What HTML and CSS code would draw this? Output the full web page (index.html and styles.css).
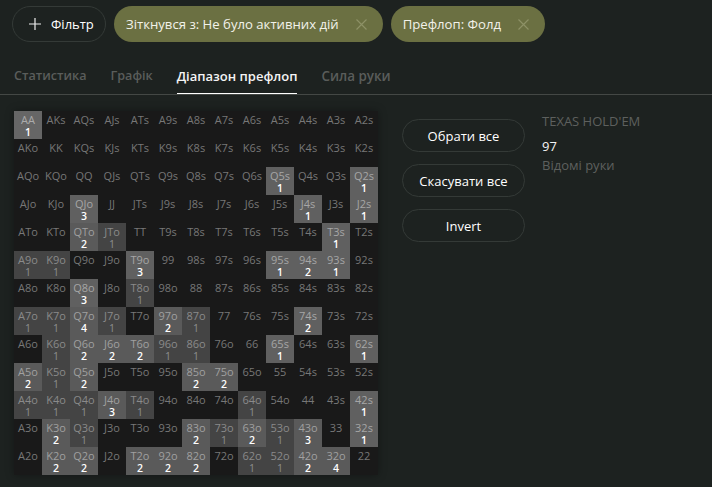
FILE: index.html
```html
<!DOCTYPE html>
<html lang="uk">
<head>
<meta charset="utf-8">
<title>Діапазон префлоп</title>
<link rel="stylesheet" href="styles.css">
</head>
<body>
<div class="filters">
  <button class="add-filter"><svg class="plus" viewBox="0 0 12 12"><path d="M6 0v12M0 6h12"/></svg>Фільтр</button>
  <div class="chip"><span>Зіткнувся з: Не було активних дій</span><svg class="close" viewBox="0 0 11 11"><path d="M.5.5l10 10M10.5.5l-10 10"/></svg></div>
  <div class="chip"><span>Префлоп: Фолд</span><svg class="close" viewBox="0 0 11 11"><path d="M.5.5l10 10M10.5.5l-10 10"/></svg></div>
</div>
<nav class="tabs">
  <span class="tab">Статистика</span>
  <span class="tab">Графік</span>
  <span class="tab active">Діапазон префлоп</span>
  <span class="tab wide">Сила руки</span>
</nav>
<main class="content">
  <div class="grid">
    <div class="cell s4">AA<b>1</b></div><div class="cell">AKs</div><div class="cell">AQs</div><div class="cell">AJs</div><div class="cell">ATs</div><div class="cell">A9s</div><div class="cell">A8s</div><div class="cell">A7s</div><div class="cell">A6s</div><div class="cell">A5s</div><div class="cell">A4s</div><div class="cell">A3s</div><div class="cell">A2s</div>
    <div class="cell">AKo</div><div class="cell">KK</div><div class="cell">KQs</div><div class="cell">KJs</div><div class="cell">KTs</div><div class="cell">K9s</div><div class="cell">K8s</div><div class="cell">K7s</div><div class="cell">K6s</div><div class="cell">K5s</div><div class="cell">K4s</div><div class="cell">K3s</div><div class="cell">K2s</div>
    <div class="cell">AQo</div><div class="cell">KQo</div><div class="cell">QQ</div><div class="cell">QJs</div><div class="cell">QTs</div><div class="cell">Q9s</div><div class="cell">Q8s</div><div class="cell">Q7s</div><div class="cell">Q6s</div><div class="cell s3">Q5s<b>1</b></div><div class="cell">Q4s</div><div class="cell">Q3s</div><div class="cell s3">Q2s<b>1</b></div>
    <div class="cell">AJo</div><div class="cell">KJo</div><div class="cell s3">QJo<b>3</b></div><div class="cell">JJ</div><div class="cell">JTs</div><div class="cell">J9s</div><div class="cell">J8s</div><div class="cell">J7s</div><div class="cell">J6s</div><div class="cell">J5s</div><div class="cell s3">J4s<b>1</b></div><div class="cell">J3s</div><div class="cell s3">J2s<b>1</b></div>
    <div class="cell">ATo</div><div class="cell">KTo</div><div class="cell s2">QTo<b>2</b></div><div class="cell s1">JTo<i>1</i></div><div class="cell">TT</div><div class="cell">T9s</div><div class="cell">T8s</div><div class="cell">T7s</div><div class="cell">T6s</div><div class="cell">T5s</div><div class="cell">T4s</div><div class="cell s3">T3s<b>1</b></div><div class="cell">T2s</div>
    <div class="cell s1">A9o<i>1</i></div><div class="cell s1">K9o<i>1</i></div><div class="cell">Q9o</div><div class="cell">J9o</div><div class="cell s3">T9o<b>3</b></div><div class="cell">99</div><div class="cell">98s</div><div class="cell">97s</div><div class="cell">96s</div><div class="cell s3">95s<b>1</b></div><div class="cell s3">94s<b>2</b></div><div class="cell s3">93s<b>1</b></div><div class="cell">92s</div>
    <div class="cell">A8o</div><div class="cell">K8o</div><div class="cell s3">Q8o<b>3</b></div><div class="cell">J8o</div><div class="cell s1">T8o<i>1</i></div><div class="cell">98o</div><div class="cell">88</div><div class="cell">87s</div><div class="cell">86s</div><div class="cell">85s</div><div class="cell">84s</div><div class="cell">83s</div><div class="cell">82s</div>
    <div class="cell s1">A7o<i>1</i></div><div class="cell s1">K7o<i>1</i></div><div class="cell s2">Q7o<b>4</b></div><div class="cell s1">J7o<i>1</i></div><div class="cell">T7o</div><div class="cell s2">97o<b>2</b></div><div class="cell s1">87o<i>1</i></div><div class="cell">77</div><div class="cell">76s</div><div class="cell">75s</div><div class="cell s3">74s<b>2</b></div><div class="cell">73s</div><div class="cell">72s</div>
    <div class="cell">A6o</div><div class="cell s1">K6o<i>1</i></div><div class="cell s2">Q6o<b>2</b></div><div class="cell s2">J6o<b>2</b></div><div class="cell s2">T6o<b>2</b></div><div class="cell s1">96o<i>1</i></div><div class="cell s1">86o<i>1</i></div><div class="cell">76o</div><div class="cell">66</div><div class="cell s3">65s<b>1</b></div><div class="cell">64s</div><div class="cell">63s</div><div class="cell s3">62s<b>1</b></div>
    <div class="cell s2">A5o<b>2</b></div><div class="cell s1">K5o<i>1</i></div><div class="cell s2">Q5o<b>2</b></div><div class="cell">J5o</div><div class="cell">T5o</div><div class="cell">95o</div><div class="cell s2">85o<b>2</b></div><div class="cell s2">75o<b>2</b></div><div class="cell">65o</div><div class="cell">55</div><div class="cell">54s</div><div class="cell">53s</div><div class="cell">52s</div>
    <div class="cell s1">A4o<i>1</i></div><div class="cell s1">K4o<i>1</i></div><div class="cell s1">Q4o<i>1</i></div><div class="cell s2">J4o<b>3</b></div><div class="cell s1">T4o<i>1</i></div><div class="cell">94o</div><div class="cell">84o</div><div class="cell">74o</div><div class="cell s1">64o<i>1</i></div><div class="cell">54o</div><div class="cell">44</div><div class="cell">43s</div><div class="cell s3">42s<b>1</b></div>
    <div class="cell">A3o</div><div class="cell s2">K3o<b>2</b></div><div class="cell s1">Q3o<i>1</i></div><div class="cell">J3o</div><div class="cell">T3o</div><div class="cell">93o</div><div class="cell s2">83o<b>2</b></div><div class="cell s1">73o<i>1</i></div><div class="cell s2">63o<b>2</b></div><div class="cell s1">53o<i>1</i></div><div class="cell s2">43o<b>3</b></div><div class="cell">33</div><div class="cell s3">32s<b>1</b></div>
    <div class="cell">A2o</div><div class="cell s2">K2o<b>2</b></div><div class="cell s2">Q2o<b>2</b></div><div class="cell">J2o</div><div class="cell s2">T2o<b>2</b></div><div class="cell s2">92o<b>2</b></div><div class="cell s2">82o<b>2</b></div><div class="cell">72o</div><div class="cell s1">62o<i>1</i></div><div class="cell s1">52o<i>1</i></div><div class="cell s2">42o<b>2</b></div><div class="cell s2">32o<b>4</b></div><div class="cell">22</div>
  </div>
  <div class="actions">
    <button class="action">Обрати все</button>
    <button class="action">Скасувати все</button>
    <button class="action">Invert</button>
  </div>
  <aside class="info">
    <div class="game">TEXAS HOLD'EM</div>
    <div class="value">97</div>
    <div class="caption">Відомі руки</div>
  </aside>
</main>
</body>
</html>
```
FILE: styles.css
```css
* { box-sizing: border-box; }
html, body { height: 100%; }
body {
  margin: 0;
  overflow: hidden;
  background: #1d2220;
  color: #fff;
  font-family: "Open Sans", "Noto Sans", sans-serif;
}
button { font: inherit; color: inherit; background: none; cursor: pointer; }

.filters { display: flex; gap: 8px; padding: 6px 0 0 12px; }
.add-filter {
  display: flex; align-items: center; gap: 10px;
  width: 94px; height: 36px; padding: 0 0 0 16px;
  border: 1px solid #343a37; border-radius: 18px;
  font-size: 13px; white-space: nowrap;
}
.plus { width: 12px; height: 12px; flex: none; }
.plus path { stroke: #eee; stroke-width: 1.2; fill: none; }
.chip {
  display: flex; align-items: center; gap: 17px;
  height: 36px; padding: 0 16px 0 12px;
  border-radius: 18px; background: #6b7042;
  font-size: 13.15px; white-space: nowrap; color: #f2f2ea;
}
.close { width: 11px; height: 11px; flex: none; }
.close path { stroke: #8d9166; stroke-width: 1.2; fill: none; }

.tabs {
  display: flex; gap: 24px; height: 41px; margin-top: 12px;
  padding: 0 14px; border-bottom: 1px solid #444845;
}
.tab { font-size: 12.6px; font-weight: 600; line-height: 44px; height: 40px; color: #5a5d5b; white-space: nowrap; }
.tab.active { font-size: 13px; color: #f4f4f4; border-bottom: 1px solid #fff; }
.tab.wide { font-size: 13.4px; }

.content { display: flex; align-items: flex-start; padding: 16px 0 0 14px; }
.grid {
  display: grid; grid-template-columns: repeat(13, 28px); grid-auto-rows: 28px;
  background: #191919; box-shadow: 0 0 8px rgba(0,0,0,.35);
}
.cell {
  display: flex; flex-direction: column; align-items: center;
  padding-top: 2px; font-size: 11px; line-height: 13px; color: #777; white-space: nowrap;
}
.cell b, .cell i { font-style: normal; font-weight: 600; font-size: 10.5px; line-height: 12px; }
.cell b { color: #fff; }
.cell i { color: #8f8f8f; font-weight: 400; }
.s1 { background: #444; color: #8a8a8a; }
.s2 { background: #5a5a5a; color: #a0a0a0; }
.s3 { background: #606060; color: #a6a6a6; }
.s4 { background: #666; color: #ababab; }

.actions { display: flex; flex-direction: column; gap: 12px; width: 123px; margin: 8px 0 0 24px; }
.action {
  height: 33px; padding: 0;
  border: 1px solid #343a37; border-radius: 17px;
  font-size: 13px;
}
.info { margin: 1px 0 0 17px; }
.game { font-size: 13px; line-height: 18px; color: #5d605e; }
.value { font-size: 13px; line-height: 18px; margin-top: 7px; color: #f4f4f4; }
.caption { font-size: 13px; line-height: 18px; margin-top: 1px; color: #5d605e; }
```
